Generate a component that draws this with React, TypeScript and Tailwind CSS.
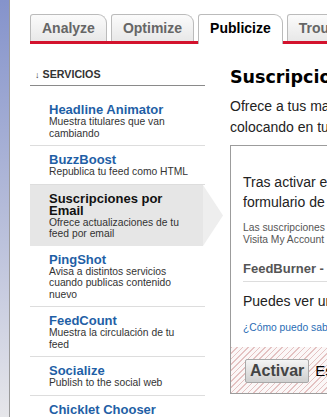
import React from "react";

const tabs = [
  { label: "Analyze", active: false },
  { label: "Optimize", active: false },
  { label: "Publicize", active: true },
  { label: "Troubleshootize", active: false },
];

const services = [
  { title: "Headline Animator", desc: ["Muestra titulares que van", "cambiando"] },
  { title: "BuzzBoost", desc: ["Republica tu feed como HTML"] },
  {
    title: "Suscripciones por Email",
    titleLines: ["Suscripciones por", "Email"],
    desc: ["Ofrece actualizaciones de tu", "feed por email"],
    selected: true,
  },
  {
    title: "PingShot",
    desc: ["Avisa a distintos servicios", "cuando publicas contenido", "nuevo"],
  },
  { title: "FeedCount", desc: ["Muestra la circulación de tu", "feed"] },
  { title: "Socialize", desc: ["Publish to the social web"] },
  { title: "Chicklet Chooser", desc: ["Botones para tus lectores"] },
];

function Tab({ label, active }: { label: string; active: boolean }) {
  return active ? (
    <div className="mr-[4px] -mb-[3px] flex h-[30px] shrink-0 items-center rounded-tl-[3px] rounded-tr-[9px] border border-b-0 border-[#bbbbbb] bg-white px-[11px] pb-[3px] text-[14px] leading-4 font-bold text-black">
      {label}
    </div>
  ) : (
    <div className="mr-[4px] flex h-[27px] shrink-0 items-center rounded-tl-[3px] rounded-tr-[9px] border border-b-0 border-[#bbbbbb] bg-gradient-to-b from-[#fbfbfb] to-[#e8e8e8] px-[11px] text-[14px] leading-4 font-bold text-[#666]">
      {label}
    </div>
  );
}

export default function App() {
  return (
    <div className="flex h-[417px] w-[327px] overflow-hidden bg-white font-['Liberation_Sans',Arial,sans-serif] text-[#222]">
      <div className="w-[10px] shrink-0 border-r border-[#9a9a9a] bg-gradient-to-b from-[#8593cb] via-[#b4bbd9] to-[#e6e6ea]" />
      <div className="ml-[20px] w-[600px] shrink-0">
        {/* tabs */}
        <div className="mt-[14px] flex items-end border-b-[3px] border-[#d3122d]">
          {tabs.map((t) => (
            <Tab key={t.label} label={t.label} active={t.active} />
          ))}
        </div>

        <div className="flex">
          {/* sidebar */}
          <div className="w-[175px] shrink-0 pt-[23px]">
            <div className="border-b border-[#8a8a8a] pb-[3px] pl-[5px] text-[10.7px] leading-[14px] font-bold text-[#333]">
              <span className="mr-[3px] text-[9px] font-normal">↓</span>SERVICIOS
            </div>
            <div className="mt-[10px]">
              {services.map((s) => (
                <div
                  key={s.title}
                  className={
                    s.selected
                      ? "relative w-[173px] bg-[#e6e6e6] pt-[8px] pb-[6px] pl-[19px]"
                      : "border-b border-[#dddddd] pt-[8px] pb-[6px] pl-[19px]"
                  }
                >
                  <div
                    className={
                      s.selected
                        ? "text-[13px] leading-[12px] font-bold text-[#111]"
                        : "text-[13px] leading-[12px] font-bold text-[#1f5fa6]"
                    }
                  >
                    {(s.titleLines ?? [s.title]).map((l) => (
                      <div key={l}>{l}</div>
                    ))}
                  </div>
                  <div className="text-[10.3px] leading-[11.5px] text-[#333]">
                    {s.desc.map((l) => (
                      <div key={l}>{l}</div>
                    ))}
                  </div>
                  {s.selected && (
                    <svg
                      className="absolute top-0 left-full h-full w-[20px]"
                      viewBox="0 0 20 61"
                      preserveAspectRatio="none"
                    >
                      <polygon points="0,0 20,30.5 0,61" fill="#eeeeee" />
                    </svg>
                  )}
                </div>
              ))}
            </div>
          </div>

          {/* main */}
          <div className="ml-[25px] w-[400px] shrink-0 pt-[23px]">
            <h1 className="font-['DejaVu_Sans',Verdana,sans-serif] text-[17.5px] leading-[20px] font-bold whitespace-nowrap text-black">
              Suscripciones por Email
            </h1>
            <div className="mt-[9px] text-[14px] leading-[21px] whitespace-nowrap">
              <div>Ofrece a tus mas fieles lectores actualizaciones por email</div>
              <div>colocando en tu sitio un formulario de suscripción.</div>
            </div>

            <div className="mt-[7px] border border-[#9c9c9c]">
              <div className="px-[12px] pt-[26px]">
                <div className="text-[14px] leading-[20px] whitespace-nowrap">
                  <div>Tras activar este servicio podrás incluir un</div>
                  <div>formulario de suscripción en tu sitio.</div>
                </div>
                <div className="mt-[10px] text-[10.3px] leading-[12px] whitespace-nowrap text-[#555]">
                  <div>Las suscripciones se gestionan mediante FeedBurner.</div>
                  <div>Visita My Account para cambiar tus preferencias.</div>
                </div>
                <div className="mt-[15px] border-b border-[#dddddd] pb-[4px] text-[13px] leading-[16px] font-bold whitespace-nowrap text-[#555]">
                  FeedBurner - Email Subscriptions
                </div>
                <div className="mt-[9px] text-[14px] leading-[20px] whitespace-nowrap">
                  Puedes ver un ejemplo del formulario
                </div>
                <div className="mt-[11px] text-[10.3px] leading-[12px] whitespace-nowrap text-[#2a6db5]">
                  ¿Cómo puedo saber quién está suscrito?
                </div>
              </div>
              <div className="mt-[13px] flex items-center bg-[repeating-linear-gradient(135deg,#e4c2c2_0px,#e4c2c2_1px,#fbf7f7_1px,#fbf7f7_4px)] pt-[12px] pb-[10px] pl-[14px]">
                <button className="h-[24px] rounded-[2px] border border-[#a8a8a8] bg-gradient-to-b from-[#f4f4f4] to-[#cfcfcf] px-[4px] text-[16px] leading-[20px] font-bold text-[#444]">
                  Activar
                </button>
                <span className="ml-[6px] text-[15px] whitespace-nowrap text-black">
                  Este servicio no está activo
                </span>
              </div>
            </div>
          </div>
        </div>
      </div>
    </div>
  );
}
